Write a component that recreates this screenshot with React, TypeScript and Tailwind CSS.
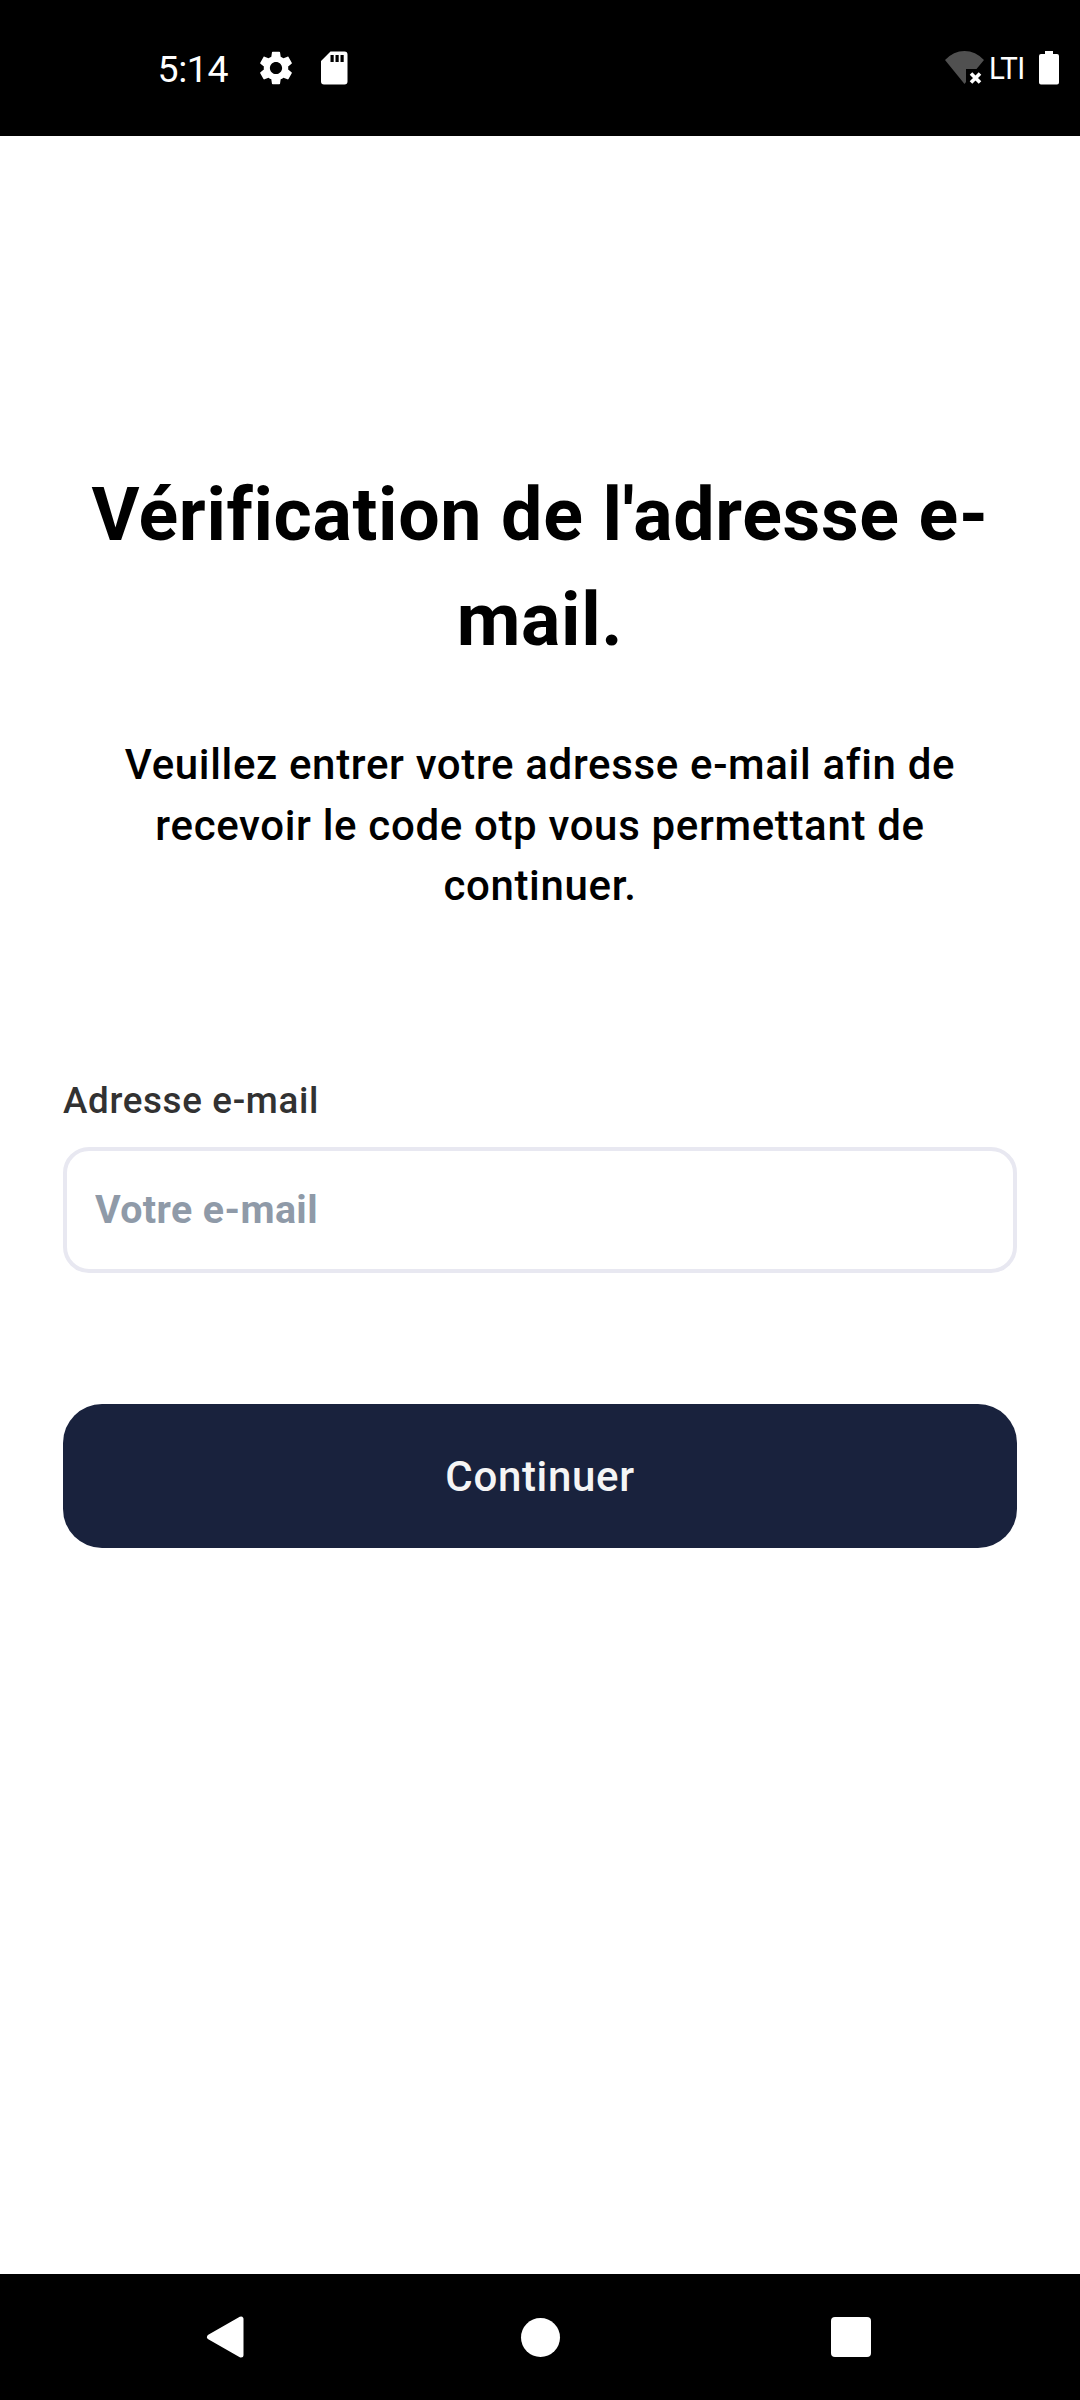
function StatusBar() {
  return (
    <header className="flex h-[136px] shrink-0 items-start bg-black text-white">
      <div className="mt-[48px] ml-[157.500px] h-[42px] w-[79.500px] text-[37.500px] leading-[42px] tracking-[-0.400px] whitespace-nowrap">5:14</div>
      <svg className="mt-[51px] ml-[22px] h-[34px] w-[34px]" viewBox="2 2 20 20" fill="currentColor">
        <path d="M19.14 12.94c.04-.3.06-.61.06-.94 0-.32-.02-.64-.07-.94l2.03-1.58c.18-.14.23-.41.12-.61l-1.92-3.32c-.12-.22-.37-.29-.59-.22l-2.39.96c-.5-.38-1.03-.7-1.62-.94l-.36-2.54c-.04-.24-.24-.41-.48-.41h-3.84c-.24 0-.43.17-.47.41l-.36 2.54c-.59.24-1.13.57-1.62.94l-2.39-.96c-.22-.08-.47 0-.59.22L2.74 8.87c-.12.21-.08.47.12.61l2.03 1.58c-.05.3-.09.63-.09.94s.02.64.07.94l-2.03 1.58c-.18.14-.23.41-.12.61l1.92 3.32c.12.22.37.29.59.22l2.39-.96c.5.38 1.03.7 1.62.94l.36 2.54c.05.24.24.41.48.41h3.84c.24 0 .44-.17.47-.41l.36-2.54c.59-.24 1.13-.56 1.62-.94l2.39.96c.22.08.47 0 .59-.22l1.92-3.32c.12-.22.07-.47-.12-.61l-2.01-1.58zM12 15.6c-1.98 0-3.6-1.62-3.6-3.6s1.62-3.6 3.6-3.6 3.6 1.62 3.6 3.6-1.62 3.6-3.6 3.6z" />
      </svg>
      <svg className="mt-[51px] ml-[27px] h-[34px] w-[28px]" viewBox="0 0 28 34" fill="currentColor" fillRule="evenodd">
        <path d="M10.5 .5H24.5Q27.500 .5 27.500 3.500V30.500Q27.500 33.500 24.500 33.500H4Q1 33.500 1 30.500V10ZM10.500 4V11H13.700V4ZM15.500 4V11H18.700V4ZM20.500 4V11H23.700V4Z" />
      </svg>
      <div className="grow" />
      <svg className="mt-[51px] h-[34px] w-[40px]" viewBox="0 0 40 34">
        <path d="M0 9Q8.500 0 19.500 0T39 9L31.500 18H21V31L19.500 33Z" fill="#505050" />
        <path d="M26 22.500L35 31.500M35 22.500L26 31.500" stroke="white" strokeWidth="3.600" fill="none" />
      </svg>
      <div className="mt-[48px] ml-[4px] h-[40px] w-[36px] origin-left scale-x-[0.92] text-[32px] leading-[40px] tracking-[-0.700px] whitespace-nowrap">LTI</div>
      <svg className="mt-[51px] mr-[21px] ml-[14px] h-[34px] w-[20px]" viewBox="0 0 20 34" fill="currentColor">
        <path d="M6 0H14V3H18Q20 3 20 5V31.500Q20 33.500 18 33.500H2Q0 33.500 0 31.500V5Q0 3 2 3H6Z" />
      </svg>
    </header>
  );
}

function NavigationBar() {
  return (
    <nav className="flex h-[126px] shrink-0 items-center bg-black">
      <svg className="ml-[206px] h-[44px] w-[38px]" viewBox="0 0 38 44" fill="white" stroke="white" strokeWidth="5" strokeLinejoin="round">
        <path d="M3.500 22L35 4V40Z" />
      </svg>
      <div className="ml-[276.500px] size-[39px] rounded-full bg-white" />
      <div className="ml-[271px] size-[40px] rounded-[4px] bg-white" />
    </nav>
  );
}

export default function App() {
  return (
    <div className="flex h-[2400px] w-[1080px] flex-col bg-white font-['Roboto',sans-serif] text-black">
      <StatusBar />
      <main className="flex grow flex-col px-[63px] pt-[327px]">
        <h1 className="text-center text-[73.5px] leading-[105px] font-bold tracking-[0.656px]">
          Vérification de l'adresse e-
          <br />
          mail.
        </h1>
        <p className="mt-[62px] text-center text-[42px] leading-[60.500px] font-medium tracking-[0.656px]">
          Veuillez entrer votre adresse e-mail afin de
          <br />
          recevoir le code otp vous permettant de
          <br />
          continuer.
        </p>
        <label htmlFor="email" className="mt-[158.500px] block h-[52px] text-[36.750px] leading-[52px] font-medium tracking-[0.656px] text-[#323232]">
          Adresse e-mail
        </label>
        <input
          id="email"
          placeholder="Votre e-mail"
          className="mt-[20px] block h-[126px] w-full rounded-[26px] border-4 border-[#e8e8f1] bg-white px-[28px] pb-[1px] text-[39.375px] font-bold tracking-[0.400px] placeholder:text-[#8f9aa8]"
        />
        <button className="mt-[131px] block h-[144px] w-full rounded-[39px] bg-[#19223d] text-center text-[42px] leading-[146px] font-medium tracking-[0.656px] text-[#f5f5f5]">
          Continuer
        </button>
      </main>
      <NavigationBar />
    </div>
  );
}
